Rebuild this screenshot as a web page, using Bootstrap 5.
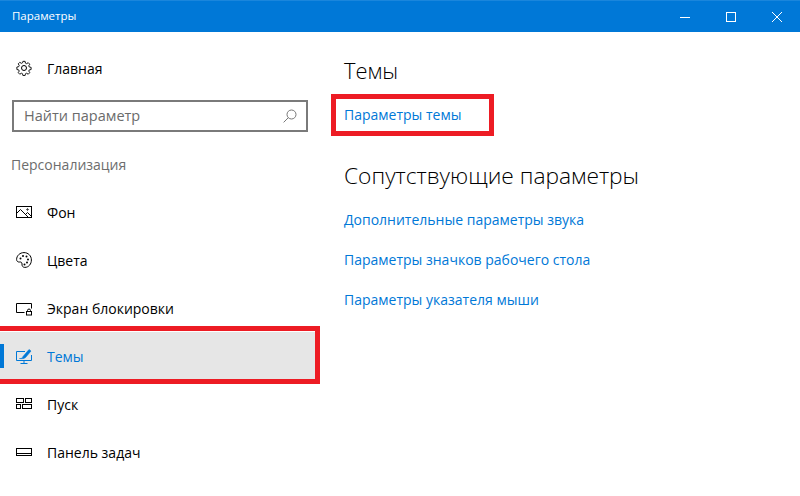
<!DOCTYPE html>
<html lang="ru">
<head>
  <meta charset="UTF-8" />
  <meta name="viewport" content="width=device-width, initial-scale=1" />
  <title>Параметры</title>
  <link href="https://cdn.jsdelivr.net/npm/bootstrap@5.3.0/dist/css/bootstrap.min.css" rel="stylesheet" />
  <style>
    html, body { height: 100%; overflow: hidden; }
    body { font-family: "Open Sans", "Noto Sans", sans-serif; font-size: 14px; color: #000; background: #fff; }
    .win-title { height: 32px; background: #0078d7; border-top: 1px solid #1a86dc; color: #fff; font-size: 11.5px; padding-left: 12px; }
    .win-title > span { margin-top: -2px; }
    .win-btn { width: 46px; height: 31px; }
    .side-pane { width: 320px; flex: none; }
    .home-row { height: 48px; margin-top: 12px; }
    .nav-row { height: 48px; padding-left: 16px; color: #000; text-decoration: none; font-size: 14px; position: relative; }
    .nav-row svg { width: 16px; height: 16px; flex: none; margin-right: 15px; }
    .nav-row.active-row { background: #e6e6e6; color: #0078d7; }
    .nav-row.active-row::before { content: ""; position: absolute; left: 0; top: 12px; width: 4px; height: 24px; background: #0078d7; }
    .find-box { margin: 8px 12px 0; height: 32px; border: 2px solid #7a7a7a; padding: 0 9px 0 10px; color: #6b6b6b; font-size: 14.5px; }
    .group-label { margin: 21px 0 11px 11px; height: 24px; color: #6d6d6d; font-size: 14px; line-height: 24px; }
    .main-pane { padding: 21px 0 0 24px; }
    .main-pane h1 { font-size: 21.9px; font-weight: 300; line-height: 36px; margin: 0; }
    .main-pane h2 { font-size: 22.75px; font-weight: 300; line-height: 36px; margin: 33px 0 0; }
    .set-link { display: block; color: #0078d7; text-decoration: none; font-size: 14px; line-height: 20px; }
    .theme-link { margin-top: 16px; }
    .rel-links { margin-top: 16px; gap: 20px; }
    .red-mark { position: absolute; border: 5px solid #ed1c24; pointer-events: none; }
    .mark-link { left: 331px; top: 94px; width: 163px; height: 42px; }
    .mark-nav { left: -6px; top: 326px; width: 326px; height: 58px; }
  </style>
</head>
<body>

<div class="win-title d-flex align-items-center justify-content-between">
  <span>Параметры</span>
  <div class="d-flex">
    <div class="win-btn d-flex align-items-center justify-content-center">
      <svg width="10" height="10" viewBox="0 0 10 10"><path d="M0 5.500h10" stroke="#fff" fill="none"/></svg>
    </div>
    <div class="win-btn d-flex align-items-center justify-content-center">
      <svg width="10" height="10" viewBox="0 0 10 10"><rect x=".5" y=".5" width="9" height="9" stroke="#fff" fill="none"/></svg>
    </div>
    <div class="win-btn d-flex align-items-center justify-content-center">
      <svg width="10" height="10" viewBox="0 0 10 10"><path d="M0 0l10 10M10 0L0 10" stroke="#fff" fill="none"/></svg>
    </div>
  </div>
</div>

<div class="d-flex">
  <div class="side-pane">
    <a class="nav-row home-row d-flex align-items-center" href="#">
      <svg viewBox="0 0 16 16" fill="none" stroke="#000" stroke-width="1"><circle cx="8" cy="8" r="2.500"/><path d="M6.800.6h2.400l.4 2 1.300.6 1.800-1.100 1.700 1.700-1.100 1.800.6 1.300 2 .4v2.400l-2 .4-.6 1.300 1.100 1.800-1.700 1.700-1.800-1.100-1.300.6-.4 2H6.800l-.4-2-1.300-.6-1.800 1.100-1.700-1.700 1.100-1.800-.6-1.300-2-.4V6.900l2-.4.6-1.300-1.100-1.800 1.700-1.700 1.800 1.100 1.300-.6z" transform="translate(.8 .8) scale(.9)"/></svg>
      <span>Главная</span>
    </a>
    <div class="find-box d-flex align-items-center justify-content-between">
      <span>Найти параметр</span>
      <svg width="14" height="14" viewBox="0 0 14 14" fill="none" stroke="#777"><circle cx="8.500" cy="5.500" r="4.500"/><path d="M5.300 8.700L.6 13.400"/></svg>
    </div>
    <div class="group-label">Персонализация</div>
    <nav class="d-flex flex-column">
      <a class="nav-row d-flex align-items-center" href="#">
        <svg viewBox="0 0 16 16" fill="none" stroke="#000"><rect x=".5" y="2.500" width="15" height="11"/><path d="M.5 9.500l4-4 8 8M9.500 10.500l2-2 4 4"/><circle cx="11.500" cy="5.500" r=".7"/></svg>
        <span>Фон</span>
      </a>
      <a class="nav-row d-flex align-items-center" href="#">
        <svg viewBox="0 0 16 16" fill="none" stroke="#000"><path d="M8 .6C3.800.6.600 3.700.6 7.500c0 1.700 1.300 2.700 2.700 2.500 1.500-.2 2.900.3 2.700 2-.2 1.800.8 3.400 2.800 3.400 4 0 6.600-3.500 6.600-7.400C15.400 3.800 12.200.6 8 .6z"/><g fill="#000" stroke="none"><circle cx="4.500" cy="6.500" r="1"/><circle cx="7" cy="4" r="1"/><circle cx="10.500" cy="4.500" r="1"/><circle cx="12" cy="7.500" r="1"/><circle cx="11" cy="10.500" r="1"/><circle cx="8.500" cy="12.500" r="1"/></g></svg>
        <span>Цвета</span>
      </a>
      <a class="nav-row d-flex align-items-center" href="#">
        <svg viewBox="0 0 16 16" fill="none" stroke="#000"><path d="M8.500 12.500H.5v-9h15v5"/><rect x="10.500" y="11.500" width="5" height="3.500"/><path d="M11.500 11.500v-1a1.500 1.500 0 0 1 3 0v1"/></svg>
        <span>Экран блокировки</span>
      </a>
      <a class="nav-row active-row d-flex align-items-center" href="#">
        <svg viewBox="0 0 16 16" fill="none" stroke="#0078d7"><path d="M9 3.500H.5v9h15V7M8 12.500v2.500M4.500 15.500h7"/><path d="M3.500 10.500c1.800.2 3-.5 3.500-2L13 1.500l2 1.500-5.500 6.500c-1.500 1.200-3.500 1.300-6 1z" fill="#0078d7" stroke-width=".6"/></svg>
        <span>Темы</span>
      </a>
      <a class="nav-row d-flex align-items-center" href="#">
        <svg viewBox="0 0 16 16" fill="none" stroke="#000"><rect x=".5" y="2.500" width="7" height="4"/><rect x="9.500" y="2.500" width="6" height="4"/><rect x=".5" y="8.500" width="4" height="4"/><rect x="6.500" y="8.500" width="9" height="4"/></svg>
        <span>Пуск</span>
      </a>
      <a class="nav-row d-flex align-items-center" href="#">
        <svg viewBox="0 0 16 16" fill="none" stroke="#000"><rect x=".5" y="4.500" width="15" height="7"/><path d="M.5 9.500h15"/></svg>
        <span>Панель задач</span>
      </a>
    </nav>
  </div>
  <main class="main-pane flex-grow-1">
    <h1>Темы</h1>
    <a class="set-link theme-link" href="#">Параметры темы</a>
    <h2>Сопутствующие параметры</h2>
    <div class="rel-links d-flex flex-column">
      <a class="set-link" href="#">Дополнительные параметры звука</a>
      <a class="set-link" href="#">Параметры значков рабочего стола</a>
      <a class="set-link" href="#">Параметры указателя мыши</a>
    </div>
  </main>
</div>

<div class="red-mark mark-link"></div>
<div class="red-mark mark-nav"></div>

<script src="https://cdn.jsdelivr.net/npm/bootstrap@5.3.0/dist/js/bootstrap.bundle.min.js"></script>
</body>
</html>
